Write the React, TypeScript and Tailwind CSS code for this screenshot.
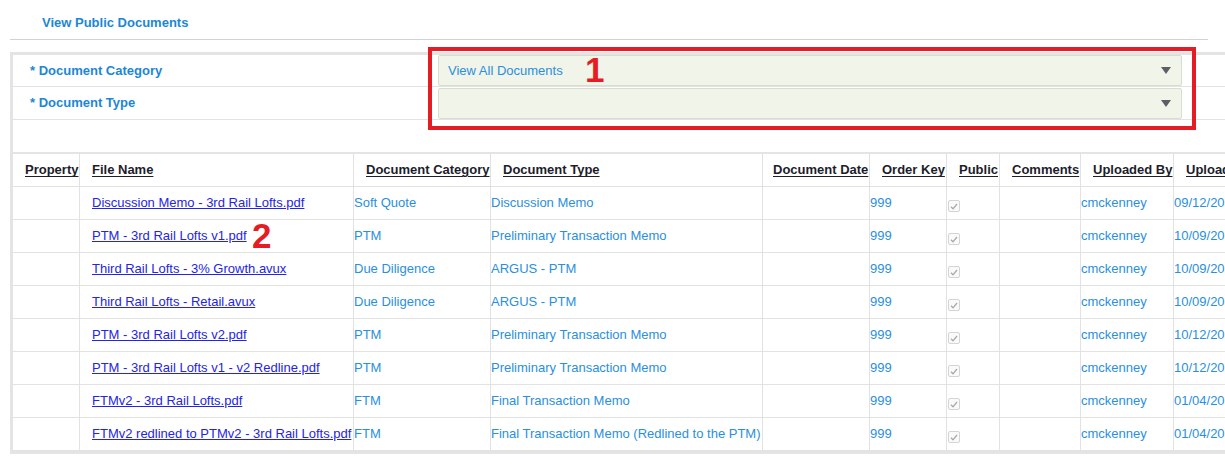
import React from "react";

type Doc = {
  file: string;
  category: string;
  type: string;
  uploaded: string;
};

const DOCS: Doc[] = [
  { file: "Discussion Memo - 3rd Rail Lofts.pdf", category: "Soft Quote", type: "Discussion Memo", uploaded: "09/12/2017" },
  { file: "PTM - 3rd Rail Lofts v1.pdf", category: "PTM", type: "Preliminary Transaction Memo", uploaded: "10/09/2017" },
  { file: "Third Rail Lofts - 3% Growth.avux", category: "Due Diligence", type: "ARGUS - PTM", uploaded: "10/09/2017" },
  { file: "Third Rail Lofts - Retail.avux", category: "Due Diligence", type: "ARGUS - PTM", uploaded: "10/09/2017" },
  { file: "PTM - 3rd Rail Lofts v2.pdf", category: "PTM", type: "Preliminary Transaction Memo", uploaded: "10/12/2017" },
  { file: "PTM - 3rd Rail Lofts v1 - v2 Redline.pdf", category: "PTM", type: "Preliminary Transaction Memo", uploaded: "10/12/2017" },
  { file: "FTMv2 - 3rd Rail Lofts.pdf", category: "FTM", type: "Final Transaction Memo", uploaded: "01/04/2018" },
  { file: "FTMv2 redlined to PTMv2 - 3rd Rail Lofts.pdf", category: "FTM", type: "Final Transaction Memo (Redlined to the PTM)", uploaded: "01/04/2018" },
];

const COLS = "grid grid-cols-[67px_274px_137px_272px_107px_77px_53px_81px_93px_100px]";

function Caret() {
  return (
    <svg width="10" height="7" viewBox="0 0 10 7" className="text-[#5b6068]">
      <path d="M0 0h10L5 7z" fill="currentColor" />
    </svg>
  );
}

function Select({ value }: { value?: string }) {
  return (
    <div className="flex h-[31px] w-[744px] items-center justify-between rounded-[2px] border border-[#d9ddcd] bg-[#f1f4e8] pl-[9px] pr-[10px]">
      <span className="text-[13px] text-[#2a8fe0]">{value}</span>
      <Caret />
    </div>
  );
}

function Check() {
  return (
    <span className="mt-[13px] ml-px flex h-[12px] w-[12px] items-center justify-center rounded-[2px] border border-[#d4d4d4] bg-[#fafafa]">
      <svg width="8" height="7" viewBox="0 0 8 7">
        <path d="M1 3.8 3 5.8 7 1" fill="none" stroke="#a8a8a8" strokeWidth="1.3" />
      </svg>
    </span>
  );
}

const HEADERS: [string, string][] = [
  ["Property", "pl-[12px]"],
  ["File Name", "pl-[12px]"],
  ["Document Category", "pl-[12px]"],
  ["Document Type", "pl-[12px]"],
  ["Document Date", "pl-[10px]"],
  ["Order Key", "pl-[12px]"],
  ["Public", "pl-[12px]"],
  ["Comments", "pl-[12px]"],
  ["Uploaded By", "pl-[12px]"],
  ["Upload Date", "pl-[12px]"],
];

export default function App() {
  return (
    <div className="relative h-[466px] w-[1225px] overflow-hidden bg-white font-['Liberation_Sans',Arial,sans-serif] text-[13px]">
      <div className="h-[39px] pl-[42px] pt-[15px] text-[13px] font-bold leading-[15px] text-[#1b87d6]">
        View Public Documents
      </div>
      <div className="ml-[10px] h-px w-[1198px] bg-[#d2d2d2]" />

      <div className="mt-[12px] ml-[10px] w-[1260px] border-l-[3px] border-t-[3px] border-[#e4e4e4]">
        <div className="flex h-[32px] items-center border-b border-[#e2e2e2]">
          <div className="w-[425px] pl-[17px] font-bold text-[#1b87d6]">* Document Category</div>
          <Select value="View All Documents" />
        </div>
        <div className="flex h-[33px] items-center border-b border-[#e2e2e2]">
          <div className="w-[425px] pl-[17px] font-bold text-[#1b87d6]">* Document Type</div>
          <Select />
        </div>
        <div className="h-[32px]" />
      </div>

      <div className="ml-[10px] w-[1260px] border-y-[3px] border-l-[3px] border-t-2 border-[#e4e4e4]">
        <div className={`${COLS} h-[33px] border-b border-[#e2e2e2]`}>
          {HEADERS.map(([h, pad]) => (
            <div
              key={h}
              className={`flex items-center whitespace-nowrap border-r border-[#e2e2e2] ${pad} font-bold text-[#1d1d2c] underline underline-offset-2`}
            >
              {h}
            </div>
          ))}
        </div>
        {DOCS.map((d) => (
          <div key={d.file} className={`${COLS} h-[33px] border-b border-[#e2e2e2] text-[#2a8fe0]`}>
            <div className="border-r border-[#e2e2e2]" />
            <div className="flex items-center whitespace-nowrap border-r border-[#e2e2e2] pl-[12px]">
              <span className="text-[#2424e6] underline underline-offset-1">{d.file}</span>
            </div>
            <div className="flex items-center whitespace-nowrap border-r border-[#e2e2e2]">{d.category}</div>
            <div className="flex items-center whitespace-nowrap border-r border-[#e2e2e2]">{d.type}</div>
            <div className="border-r border-[#e2e2e2]" />
            <div className="flex items-center border-r border-[#e2e2e2]">999</div>
            <div className="flex items-start border-r border-[#e2e2e2]">
              <Check />
            </div>
            <div className="border-r border-[#e2e2e2]" />
            <div className="flex items-center border-r border-[#e2e2e2]">cmckenney</div>
            <div className="flex items-center whitespace-nowrap">{d.uploaded}</div>
          </div>
        ))}
      </div>

      {/* annotations */}
      <div className="absolute left-[428px] top-[47px] h-[83px] w-[768px] border-[4px] border-[#e41d25]" />
      <span className="absolute left-[585px] top-[50px] text-[35px] font-bold leading-[40px] text-[#e41d25]">1</span>
      <span className="absolute left-[252px] top-[216px] text-[35px] font-bold leading-[40px] text-[#e41d25]">2</span>
    </div>
  );
}
